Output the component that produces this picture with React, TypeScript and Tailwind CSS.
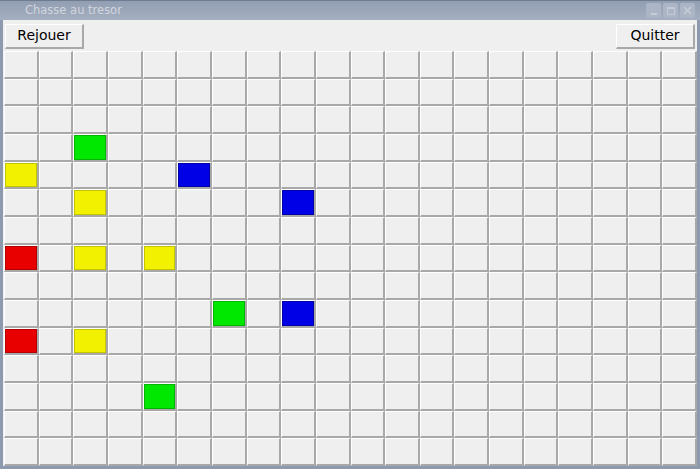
// Chasse au tresor — a window of square buttons, some of them coloured.

type Cell = 'green' | 'yellow' | 'blue' | 'red';

const ROWS = 15;
const COLS = 20;

const COLOURED: Record<string, Cell> = {
    '3-2': 'green',
    '4-0': 'yellow',
    '4-5': 'blue',
    '5-2': 'yellow',
    '5-8': 'blue',
    '7-0': 'red',
    '7-2': 'yellow',
    '7-4': 'yellow',
    '9-6': 'green',
    '9-8': 'blue',
    '10-0': 'red',
    '10-2': 'yellow',
    '12-4': 'green',
};

const CELL_CLASS: Record<Cell, string> = {
    green: 'bg-[#00e800] shadow-[inset_0_0_0_1px_#00b400]',
    yellow: 'bg-[#f2f200] shadow-[inset_0_0_0_1px_#c4c400]',
    blue: 'bg-[#0000e6] shadow-[inset_0_0_0_1px_#0000a8]',
    red: 'bg-[#e80000] shadow-[inset_0_0_0_1px_#b40000]',
};

function GridCell({ kind }: { kind?: Cell }) {
    return (
        <div
            className={`border-t border-l border-white border-r-2 border-b-2 border-r-[#a8a8a8] border-b-[#a8a8a8] ${
                kind ? CELL_CLASS[kind] : 'bg-[#efefef]'
            }`}
        />
    );
}

function ToolButton({ label }: { label: string }) {
    return (
        <button className="h-[25px] w-[79px] border-t border-l border-white border-r-2 border-b-2 border-r-[#a8a8a8] border-b-[#a8a8a8] bg-[#efefef] text-[14px] text-black">
            {label}
        </button>
    );
}

function TitleButton({ children }: { children: React.ReactNode }) {
    return (
        <div className="flex h-[15px] w-[15px] items-center justify-center rounded-[2px] bg-[#abb5c5]">
            {children}
        </div>
    );
}

export default function App() {
    const cells = [];
    for (let r = 0; r < ROWS; r++) {
        for (let c = 0; c < COLS; c++) {
            cells.push(<GridCell key={`${r}-${c}`} kind={COLOURED[`${r}-${c}`]} />);
        }
    }

    return (
        <div
            className="flex h-[469px] w-[700px] flex-col bg-[#8d99ad]"
            style={{ fontFamily: '"DejaVu Sans", sans-serif' }}
        >
            {/* title bar */}
            <div className="flex h-[20px] items-center border-t border-[#6f7b90] bg-gradient-to-b from-[#929eb2] to-[#a4afc0] pl-[25px] pr-[5px]">
                <span className="flex-1 text-[11.5px] font-medium text-[#d2d6de]">Chasse au tresor</span>
                <div className="flex gap-[2px]">
                    <TitleButton>
                        <div className="mt-[7px] h-[2px] w-[6px] bg-[#c6ccd6]" />
                    </TitleButton>
                    <TitleButton>
                        <div className="h-[8px] w-[8px] border border-t-2 border-[#c6ccd6]" />
                    </TitleButton>
                    <TitleButton>
                        <svg width="9" height="9" viewBox="0 0 9 9">
                            <path d="M1 1 L8 8 M8 1 L1 8" stroke="#c6ccd6" strokeWidth="1.6" />
                        </svg>
                    </TitleButton>
                </div>
            </div>

            {/* content */}
            <div className="mx-[3px] mb-[3px] flex flex-1 flex-col bg-[#efefef]">
                <div className="flex h-[31px] items-center justify-between px-[2px] pt-[1px]">
                    <ToolButton label="Rejouer" />
                    <ToolButton label="Quitter" />
                </div>
                <div className="grid flex-1 grid-cols-20 grid-rows-15 pl-[1px]">
                    {cells}
                </div>
            </div>
        </div>
    );
}
